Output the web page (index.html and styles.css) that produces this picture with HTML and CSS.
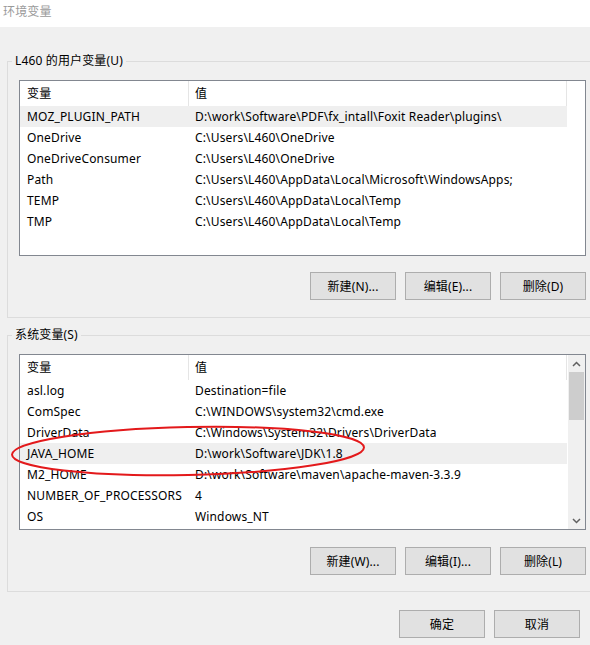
FILE: index.html
```html
<!DOCTYPE html>
<html lang="zh-CN">

<head>
    <meta charset="UTF-8">
    <meta name="viewport" content="width=device-width, initial-scale=1.0">
    <title>环境变量</title>

    <link rel="stylesheet" href="styles.css">
</head>

<body>
    <div class="titlebar">环境变量</div>

    <fieldset class="group group-user">
        <legend>L460 的用户变量(U)</legend>
        <div class="list">
            <div class="list-main">
                <div class="list-head"><span>变量</span><span class="col-val">值</span></div>
                <div class="row selected"><span>MOZ_PLUGIN_PATH</span><span class="col-val">D:\work\Software\PDF\fx_intall\Foxit Reader\plugins\</span></div>
                <div class="row"><span>OneDrive</span><span class="col-val">C:\Users\L460\OneDrive</span></div>
                <div class="row"><span>OneDriveConsumer</span><span class="col-val">C:\Users\L460\OneDrive</span></div>
                <div class="row"><span>Path</span><span class="col-val">C:\Users\L460\AppData\Local\Microsoft\WindowsApps;</span></div>
                <div class="row"><span>TEMP</span><span class="col-val">C:\Users\L460\AppData\Local\Temp</span></div>
                <div class="row"><span>TMP</span><span class="col-val">C:\Users\L460\AppData\Local\Temp</span></div>
            </div>
        </div>
        <div class="buttons">
            <button>新建(N)...</button>
            <button>编辑(E)...</button>
            <button>删除(D)</button>
        </div>
    </fieldset>

    <fieldset class="group group-system">
        <legend>系统变量(S)</legend>
        <div class="list">
            <div class="list-main">
                <div class="list-head"><span>变量</span><span class="col-val">值</span></div>
                <div class="row"><span>asl.log</span><span class="col-val">Destination=file</span></div>
                <div class="row"><span>ComSpec</span><span class="col-val">C:\WINDOWS\system32\cmd.exe</span></div>
                <div class="row"><span>DriverData</span><span class="col-val">C:\Windows\System32\Drivers\DriverData</span></div>
                <div class="row selected"><span>JAVA_HOME</span><span class="col-val">D:\work\Software\JDK\1.8</span></div>
                <div class="row"><span>M2_HOME</span><span class="col-val">D:\work\Software\maven\apache-maven-3.3.9</span></div>
                <div class="row"><span>NUMBER_OF_PROCESSORS</span><span class="col-val">4</span></div>
                <div class="row"><span>OS</span><span class="col-val">Windows_NT</span></div>
            </div>
            <div class="scrollbar">
                <div class="arrow">
                    <svg width="9" height="6" viewBox="0 0 9 6"><path d="M1 5 L4.5 1.5 L8 5" fill="none" stroke="#606060" stroke-width="1.5"/></svg>
                </div>
                <div class="track"><div class="thumb"></div></div>
                <div class="arrow">
                    <svg width="9" height="6" viewBox="0 0 9 6"><path d="M1 1 L4.5 4.5 L8 1" fill="none" stroke="#606060" stroke-width="1.5"/></svg>
                </div>
            </div>
        </div>
        <div class="buttons">
            <button>新建(W)...</button>
            <button>编辑(I)...</button>
            <button>删除(L)</button>
        </div>
    </fieldset>

    <div class="footer">
        <button>确定</button>
        <button>取消</button>
    </div>

    <!-- 红色圈注 -->
    <svg class="mark" width="590" height="645" viewBox="0 0 590 645">
        <ellipse cx="188" cy="451" rx="176" ry="24" transform="rotate(-1.2 188 451)" fill="none" stroke="#e3191b" stroke-width="2"/>
    </svg>
</body>

</html>
```

FILE: styles.css
```css
body {
    margin: 0;
    width: 590px;
    height: 645px;
    overflow: hidden;
    position: relative;
    background-color: #f0f0f0;
    font-family: "Noto Sans", "Noto Sans CJK SC", sans-serif;
    font-size: 12px;
    letter-spacing: 0.15px;
    color: #000;
}

.titlebar {
    height: 27px;
    line-height: 24px;
    padding-left: 3px;
    background-color: #fff;
    color: #9a9a9a;
}

/* 右边框在窗口外, 不画 */
.group {
    margin: 26px 0 0 7px;
    padding: 11px 0 17px 0;
    border: 1px solid #dcdcdc;
    border-right: none;
    min-width: 0;
}

.group-system {
    margin-top: 9px;
    padding-bottom: 16px;
}

.group legend {
    margin-left: 4px;
    padding: 0 3px;
    line-height: 16px;
}

.list {
    display: flex;
    width: 565px;
    height: 174px;
    margin-left: 11px;
    border: 1px solid #828790;
    background-color: #fff;
}

.list-main {
    width: 547px;
}

.list-head {
    display: grid;
    grid-template-columns: 168px 1fr;
    height: 25px;
    line-height: 25px;
    border-right: 1px solid #e5e5e5;
}

.list-head .col-val {
    border-left: 1px solid #e5e5e5;
}

.row {
    display: grid;
    grid-template-columns: 168px 1fr;
    height: 21px;
    line-height: 21px;
    white-space: nowrap;
}

.list-head span,
.row span {
    padding-left: 7px;
    overflow: hidden;
}

.list-head .col-val {
    padding-left: 6px;
}

.row.selected {
    background-color: #efefef;
}

.scrollbar {
    width: 17px;
    margin-left: auto;
    display: flex;
    flex-direction: column;
    background-color: #f0f0f0;
}

.arrow {
    height: 17px;
    display: flex;
    align-items: center;
    justify-content: center;
}

.track {
    flex: 1;
}

.thumb {
    height: 48px;
    margin: 0 1px;
    background-color: #cdcdcd;
}

.buttons {
    display: flex;
    justify-content: flex-end;
    gap: 9px;
    width: 567px;
    margin: 16px 0 0 11px;
}

.group-system .buttons {
    margin-top: 17px;
}

button {
    width: 86px;
    height: 28px;
    padding: 0;
    border: 1px solid #adadad;
    background-color: #e1e1e1;
    font-family: inherit;
    font-size: 12px;
    letter-spacing: inherit;
    color: #000;
}

.footer {
    display: flex;
    justify-content: flex-end;
    gap: 9px;
    margin-top: 18px;
    padding-right: 10px;
}

.mark {
    position: absolute;
    top: 0;
    left: 0;
    pointer-events: none;
}
```
